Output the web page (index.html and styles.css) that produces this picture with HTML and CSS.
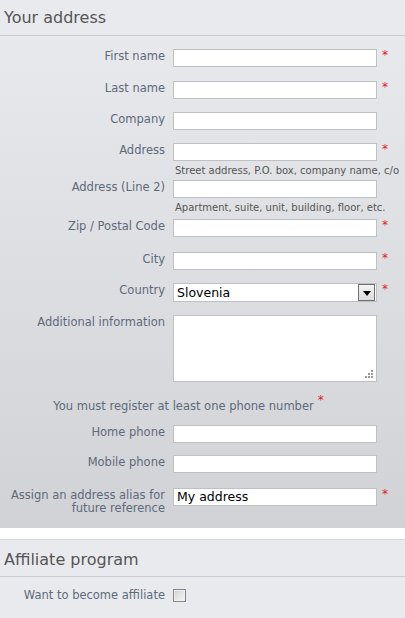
FILE: index.html
```html
<!DOCTYPE html>
<html>
<head>
<meta charset="utf-8">
<link rel="stylesheet" href="styles.css">
</head>
<body>
<section class="box address">
  <h2 class="box-title">Your address</h2>
  <div class="form">
    <div class="row r-first"><label class="lbl">First name</label><span class="input"></span><span class="req">*</span></div>
    <div class="row r-last"><label class="lbl">Last name</label><span class="input"></span><span class="req">*</span></div>
    <div class="row r-company"><label class="lbl">Company</label><span class="input"></span></div>
    <div class="row r-addr"><label class="lbl">Address</label><span class="input"></span><span class="req">*</span>
      <span class="hint">Street address, P.O. box, company name, c/o</span></div>
    <div class="row r-addr2"><label class="lbl">Address (Line 2)</label><span class="input"></span>
      <span class="hint">Apartment, suite, unit, building, floor, etc.</span></div>
    <div class="row r-zip"><label class="lbl">Zip / Postal Code</label><span class="input"></span><span class="req">*</span></div>
    <div class="row r-city"><label class="lbl">City</label><span class="input"></span><span class="req">*</span></div>
    <div class="row r-country"><label class="lbl">Country</label>
      <span class="select"><span class="select-val">Slovenia</span><span class="select-btn"><svg width="8" height="5" viewBox="0 0 8 5"><path d="M0 0h8L4 5z" fill="#000"/></svg></span></span><span class="req">*</span></div>
    <div class="row r-info"><label class="lbl">Additional information</label>
      <span class="textarea"><svg class="grip" width="8" height="8" viewBox="0 0 8 8" fill="#9a9a9a"><rect x="6" y="0" width="2" height="2"/><rect x="3" y="3" width="2" height="2"/><rect x="6" y="3" width="2" height="2"/><rect x="0" y="6" width="2" height="2"/><rect x="3" y="6" width="2" height="2"/><rect x="6" y="6" width="2" height="2"/></svg></span></div>
    <p class="note">You must register at least one phone number<span class="req note-req">*</span></p>
    <div class="row r-home"><label class="lbl">Home phone</label><span class="input"></span></div>
    <div class="row r-mobile"><label class="lbl">Mobile phone</label><span class="input"></span></div>
    <div class="row r-alias"><label class="lbl">Assign an address alias for future reference</label><span class="input"><span class="val">My address</span></span><span class="req">*</span></div>
  </div>
</section>
<section class="box affiliate">
  <h2 class="box-title">Affiliate program</h2>
  <div class="form aff-form">
    <div class="row r-aff"><label class="lbl">Want to become affiliate</label><span class="check"></span></div>
  </div>
</section>
</body>
</html>
```
FILE: styles.css
```css
* { box-sizing: border-box; }
html, body { margin: 0; padding: 0; background: #fff; }
body { width: 405px; font-family: "DejaVu Sans", Verdana, sans-serif; }

.box-title {
  margin: 0;
  height: 36px;
  padding: 8px 0 0 4px;
  font-size: 16px;
  font-weight: normal;
  color: #555;
  background: #e9eaed;
  border-bottom: 1px solid #cbccd0;
  line-height: 20px;
}
.address .form {
  background: linear-gradient(#e8e9ec, #d1d2d5);
  padding: 13px 0 13px;
}
.affiliate {
  margin-top: 11px;
  border-top: 1px solid #d6d7da;
}
.affiliate .box-title { height: 37px; padding-top: 10px; }
.aff-form { background: #e9eaed; padding: 11px 0 18px; }

.row {
  display: grid;
  grid-template-columns: 165px 204px auto;
  column-gap: 8px;
  align-items: start;
  margin-bottom: 13px;
}
.lbl {
  text-align: right;
  font-size: 11.5px;
  line-height: 13px;
  color: #5d6a7b;
  padding-top: 1px;
}
.input {
  display: block;
  height: 18px;
  background: #fff;
  border: 1px solid #bfc0c4;
  position: relative;
}
.val {
  display: block;
  font-family: "DejaVu Sans", sans-serif;
  font-size: 12.5px;
  color: #000;
  padding: 0 0 0 3px;
  line-height: 16px;
}
.req {
  color: #e02020;
  font-size: 12px;
  line-height: 10px;
  margin-left: -3px;
  padding-top: 1px;
}
.hint {
  grid-column: 2 / 4;
  font-size: 10px;
  line-height: 12px;
  color: #555;
  padding: 4px 0 0 2px;
  white-space: nowrap;
}
.r-first { margin-bottom: 14px; }
.r-addr { margin-bottom: 3px; }
.r-addr2 { margin-bottom: 5px; }
.r-zip { margin-bottom: 15px; }
.r-country { margin-bottom: 13px; }
.r-info { margin-bottom: 16px; }
.r-home { margin-bottom: 12px; }
.r-mobile { margin-bottom: 15px; }
.r-alias { margin-bottom: 0; }

.select {
  display: flex;
  align-items: center;
  height: 19px;
  background: #fff;
  border: 1px solid #bfc0c4;
  position: relative;
}
.select-val {
  flex: 1;
  font-size: 12.5px;
  color: #000;
  padding-left: 3px;
  line-height: 17px;
}
.select-btn {
  width: 17px;
  height: 17px;
  margin-right: 1px;
  border: 1px solid #6f6f6f;
  background: linear-gradient(#f4f4f4, #dcdcdc);
  display: flex;
  align-items: center;
  justify-content: center;
}
.select-btn svg { display: block; margin-top: 1px; }

.textarea {
  display: block;
  height: 67px;
  background: #fff;
  border: 1px solid #bfc0c4;
  position: relative;
}
.grip { position: absolute; right: 3px; bottom: 3px; }

.note {
  margin: 0 0 12px 0;
  text-align: center;
  font-size: 11.5px;
  line-height: 13px;
  color: #5d6a7b;
  padding: 2px 28px 0 0;
}
.note-req { margin-left: 4px; position: relative; top: -6px; }

.check {
  display: block;
  width: 13px;
  height: 13px;
  border: 1px solid #888;
  background: linear-gradient(135deg, #d2d2d2, #f6f6f6);
  box-shadow: inset 0 0 0 1px #eee;
  margin-top: 1px;
}
.r-aff { margin-bottom: 0; }
```
